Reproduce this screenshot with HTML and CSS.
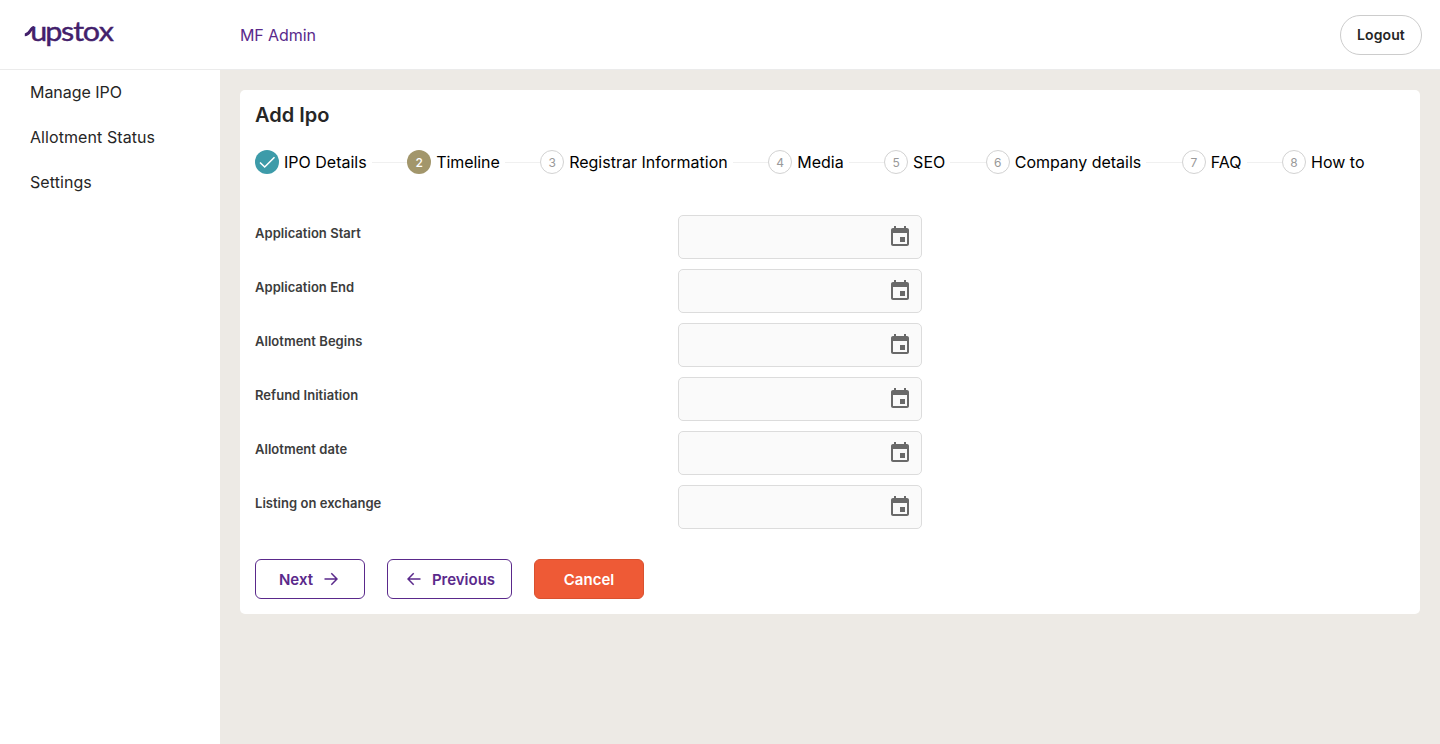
FILE: index.html
```
<!DOCTYPE html>
<html lang="en">
<head>
<meta charset="utf-8">
<title>MF Admin</title>
<link rel="stylesheet" href="styles.css">
</head>
<body>
<svg class="defs" width="0" height="0" aria-hidden="true">
  <symbol id="calendar" viewBox="0 0 24 24"><path d="M17 12h-5v5h5v-5zM16 1v2H8V1H6v2H5c-1.110 0-1.990.9-1.990 2L3 19c0 1.100.890 2 2 2h14c1.100 0 2-.9 2-2V5c0-1.100-.9-2-2-2h-1V1h-2zm3 18H5V8h14v11z"/></symbol>
</svg>
<header class="header">
  <div class="brand">
    <svg class="logo" width="92" height="32" viewBox="0 0 92 32" role="img" aria-label="upstox">
      <path class="swoosh" d="M.8 15.800C6.600 15.800 5.800 8.500 10.200 8.500"/>
      <text transform="translate(6.300 21.800) scale(1.130 1)" x="0 13.300 27.200 38 46.500 60.600" y="0">upstox</text>
    </svg>
  </div>
  <a class="app-name">MF Admin</a>
  <button class="logout">Logout</button>
</header>
<div class="body">
  <nav class="sidebar">
    <a>Manage IPO</a>
    <a class="spaced">Allotment Status</a>
    <a class="spaced">Settings</a>
  </nav>
  <main class="main">
    <section class="card">
      <h1>Add Ipo</h1>
      <ol class="steps">
        <li><span class="dot done"><svg width="24" height="24" viewBox="0 0 24 24"><path d="M5 12.500 9.700 17 19.500 7.300"/></svg></span><span>IPO Details</span></li>
        <li><span class="dot active">2</span><span class="tight">Timeline</span></li>
        <li><span class="dot">3</span><span>Registrar Information</span></li>
        <li><span class="dot">4</span><span>Media</span></li>
        <li><span class="dot">5</span><span>SEO</span></li>
        <li><span class="dot">6</span><span>Company details</span></li>
        <li><span class="dot">7</span><span>FAQ</span></li>
        <li><span class="dot">8</span><span>How to</span></li>
      </ol>
      <form class="form">
        <div class="row"><label>Application Start</label><div class="date"><svg><use href="#calendar"/></svg></div></div>
        <div class="row"><label>Application End</label><div class="date"><svg><use href="#calendar"/></svg></div></div>
        <div class="row"><label>Allotment Begins</label><div class="date"><svg><use href="#calendar"/></svg></div></div>
        <div class="row"><label>Refund Initiation</label><div class="date"><svg><use href="#calendar"/></svg></div></div>
        <div class="row"><label>Allotment date</label><div class="date"><svg><use href="#calendar"/></svg></div></div>
        <div class="row"><label>Listing on exchange</label><div class="date"><svg><use href="#calendar"/></svg></div></div>
      </form>
      <div class="actions">
        <button class="btn next">Next <svg width="14" height="14" viewBox="0 0 14 14"><path d="M.5 7h12.500M7.300 1.200 13 7l-5.700 5.800"/></svg></button>
        <button class="btn prev"><svg width="14" height="14" viewBox="0 0 14 14"><path d="M13.500 7H1M6.700 1.200 1 7l5.700 5.800"/></svg> Previous</button>
        <button class="btn cancel">Cancel</button>
      </div>
    </section>
  </main>
</div>
</body>
</html>
```
FILE: styles.css
```
* { box-sizing: border-box; }
body {
  margin: 0;
  height: 744px;
  display: flex;
  flex-direction: column;
  overflow: hidden;
  font-family: Inter, "Liberation Sans", sans-serif;
  font-size: 16px;
  color: #262626;
  background: #fff;
}
.defs { display: block; position: absolute; }
button { font-family: inherit; margin: 0; }
.header {
  height: 70px;
  flex: none;
  display: flex;
  align-items: center;
  padding-right: 18px;
  border-bottom: 1px solid #ebebeb;
}
.brand { width: 240px; padding-left: 24px; }
.logo { display: block; overflow: visible; }
.logo text { font: 400 27px Lato, sans-serif; fill: #43206b; stroke: #43206b; stroke-width: .4; }
.swoosh { fill: none; stroke: #43206b; stroke-width: 2.800; }
.app-name { color: #5a298b; letter-spacing: -.1px; }
.logout {
  margin-left: auto;
  width: 82px;
  height: 40px;
  padding: 0;
  border: 1px solid #ccc;
  border-radius: 20px;
  background: #fff;
  color: #262626;
  font-size: 14px;
  font-weight: 600;
  letter-spacing: .1px;
}
.body { flex: 1; display: flex; }
.sidebar {
  width: 220px;
  padding: 0 30px;
  display: flex;
  flex-direction: column;
}
.sidebar a { height: 45px; line-height: 45px; letter-spacing: -.04px; }
.sidebar .spaced { letter-spacing: .08px; }
.main { flex: 1; padding: 20px; background: #edeae5; }
.card { height: 524px; padding: 15px; background: #fff; border-radius: 5px; }
h1 { margin: 0; font-size: 20px; line-height: 20px; font-weight: 600; }
.steps {
  list-style: none;
  margin: 25px 0 0;
  padding: 0;
  display: flex;
  color: #000;
}
.steps li {
  flex: 1 0 auto;
  display: flex;
  align-items: center;
  gap: 5px;
  height: 24px;
  white-space: nowrap;
}
.steps li::after { content: ""; flex: 1; height: 1px; background: #f0f0f0; }
.steps li:last-child::after { background: transparent; }
.tight { letter-spacing: -.07px; }
.dot {
  width: 24px;
  height: 24px;
  flex: none;
  display: flex;
  align-items: center;
  justify-content: center;
  border: 1px solid #d2d2d2;
  border-radius: 50%;
  font-size: 12px;
  color: #999;
}
.dot.done { border: 0; background: #3d9ba9; }
.dot.active { border: 0; background: #a2966b; color: #fff; font-weight: 500; }
.dot path { fill: none; stroke: #fff; stroke-width: 1.600; }
.form { margin-top: 41px; display: grid; gap: 10px; }
.row { display: grid; grid-template-columns: 423px 244px; height: 44px; }
.row label { padding-top: 10px; font-size: 13px; line-height: 16px; font-weight: 600; letter-spacing: .03px; color: #3c3c3c; }
.date {
  display: flex;
  align-items: center;
  justify-content: flex-end;
  padding-right: 9px;
  border: 1px solid #dcdcdc;
  border-radius: 5px;
  background: #fafafa;
}
.date svg { width: 24px; height: 24px; fill: #696969; }
.actions { display: flex; gap: 22px; margin-top: 30px; }
.btn {
  width: 110px;
  height: 40px;
  padding: 0;
  display: flex;
  align-items: center;
  justify-content: center;
  gap: 11px;
  border: 1px solid #5a298b;
  border-radius: 6px;
  background: #fff;
  color: #5a298b;
  font-size: 15px;
  font-weight: 600;
}
.btn svg { fill: none; stroke: currentColor; stroke-width: 1.500; }
.next { padding-right: 3px; }
.prev { width: 125px; padding-left: 3px; }
.cancel { background: #ee5a36; border-color: #d9512f; color: #fff; }
```
